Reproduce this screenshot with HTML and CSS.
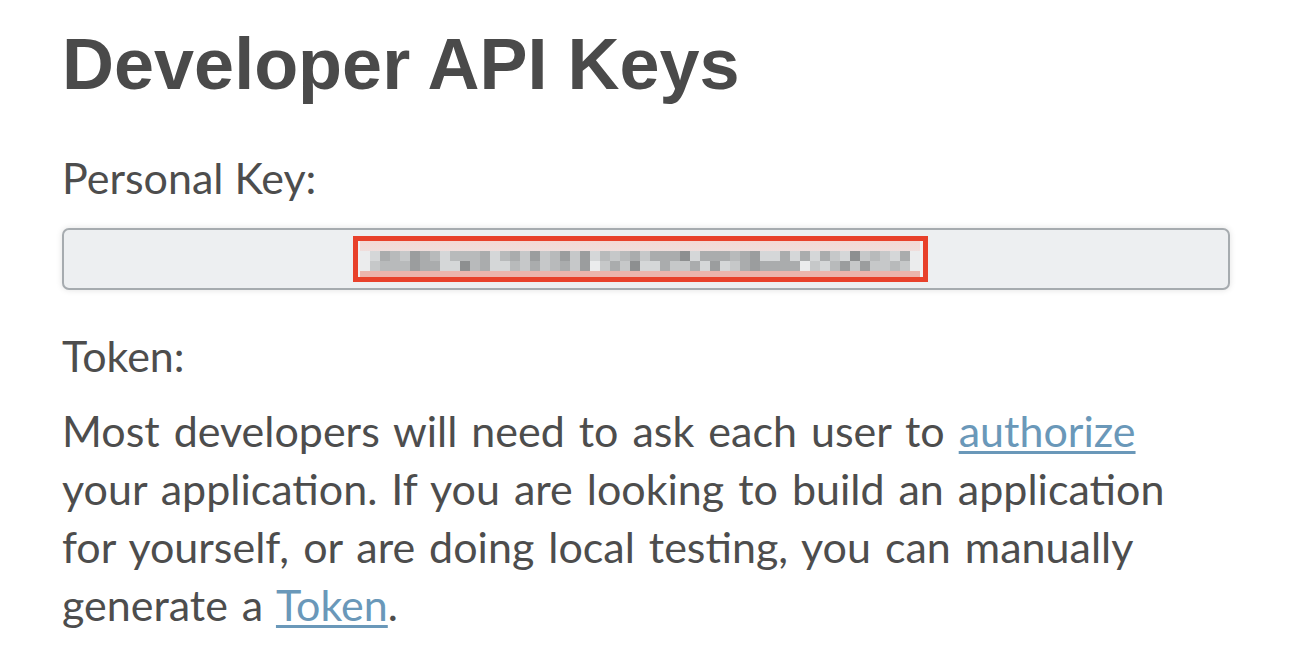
FILE: index.html
```html
<!DOCTYPE html>
<html lang="en">
<head>
<meta charset="utf-8">
<title>Developer API Keys</title>
<link rel="stylesheet" href="styles.css">
</head>
<body>
<main class="page">
  <h1 class="title">Developer API Keys</h1>
  <p class="label">Personal Key:</p>
  <div class="keybox">
    <div class="redact">
      <div class="band band-top"></div>
      <div class="row">
        <i class="s0"></i><i class="s1"></i><i class="s4"></i><i class="s3"></i><i class="s2"></i><i class="s5"></i><i class="s4"></i><i class="s3"></i><i class="s1"></i><i class="s3"></i><i class="s3"></i><i class="s3"></i><i class="s4"></i><i class="s1"></i><i class="s3"></i><i class="s4"></i><i class="s2"></i><i class="s5"></i><i class="s2"></i><i class="s3"></i><i class="s5"></i><i class="s2"></i><i class="s5"></i><i class="s1"></i><i class="s3"></i><i class="s2"></i><i class="s3"></i><i class="s4"></i>
        <i class="s2"></i><i class="s4"></i><i class="s4"></i><i class="s4"></i><i class="s6"></i><i class="s1"></i><i class="s4"></i><i class="s4"></i><i class="s4"></i><i class="s3"></i><i class="s4"></i><i class="s5"></i><i class="s1"></i><i class="s1"></i><i class="s4"></i><i class="s1"></i><i class="s4"></i><i class="s1"></i><i class="s4"></i><i class="s2"></i><i class="s1"></i><i class="s6"></i><i class="s2"></i><i class="s3"></i><i class="s2"></i><i class="s1"></i><i class="s4"></i><i class="s0"></i>
      </div>
      <div class="row">
        <i class="s0"></i><i class="s2"></i><i class="s3"></i><i class="s3"></i><i class="s3"></i><i class="s5"></i><i class="s4"></i><i class="s4"></i><i class="s1"></i><i class="s1"></i><i class="s6"></i><i class="s3"></i><i class="s4"></i><i class="s1"></i><i class="s1"></i><i class="s3"></i><i class="s2"></i><i class="s4"></i><i class="s2"></i><i class="s3"></i><i class="s4"></i><i class="s2"></i><i class="s5"></i><i class="s0"></i><i class="s2"></i><i class="s4"></i><i class="s2"></i><i class="s6"></i>
        <i class="s1"></i><i class="s1"></i><i class="s4"></i><i class="s2"></i><i class="s2"></i><i class="s4"></i><i class="s1"></i><i class="s5"></i><i class="s1"></i><i class="s2"></i><i class="s4"></i><i class="s5"></i><i class="s4"></i><i class="s4"></i><i class="s4"></i><i class="s4"></i><i class="s0"></i><i class="s2"></i><i class="s1"></i><i class="s3"></i><i class="s5"></i><i class="s2"></i><i class="s5"></i><i class="s2"></i><i class="s2"></i><i class="s3"></i><i class="s2"></i><i class="s0"></i>
      </div>
      <div class="band band-bottom"></div>
    </div>
  </div>
  <p class="label label-token">Token:</p>
  <p class="text">Most developers will need to ask each user to <a href="#">authorize</a><br>your application. If you are looking to build an application<br>for yourself, or are doing local testing, you can manually<br>generate a <a href="#">Token</a>.</p>
</main>
</body>
</html>
```

FILE: styles.css
```css
html, body {
  margin: 0;
  padding: 0;
  background: #ffffff;
}

.page {
  width: 1168px;
  padding: 21px 0 0 62px;
  color: #4d4d4d;
  font-family: "Lato", "Noto Sans", sans-serif;
}

.title {
  margin: 0;
  font-family: "Liberation Sans", Arial, sans-serif;
  font-size: 72px;
  line-height: 1.2;
  font-weight: 700;
  letter-spacing: 0;
  color: #4a4a4a;
}

.label {
  margin: 42px 0 0;
  font-size: 43px;
  line-height: 58px;
  font-weight: 400;
}

.keybox {
  margin-top: 21px;
  height: 58px;
  border: 2px solid #a6abaf;
  border-radius: 7px;
  background: #edeff1;
  box-shadow: 0 0 6px rgba(0, 0, 0, 0.12);
  display: flex;
  align-items: center;
  justify-content: center;
  padding-right: 12px;
}

.redact {
  border: 5px solid #e8412b;
  display: flex;
  flex-direction: column;
  padding: 0 3px 0 2px;
  background: #f0f0f1;
}

.band {
  height: 10px;
}

.band-top {
  background: linear-gradient(#f4d8d4, #efdedc);
}

.band-bottom {
  height: 6px;
  background: #ecb4ac;
}

.row {
  display: flex;
  height: 10px;
}

.row i {
  display: block;
  width: 10px;
  height: 10px;
}

.s0 { background: #ebeced; }
.s1 { background: #d5d7d8; }
.s2 { background: #c6c8c9; }
.s3 { background: #b8babb; }
.s4 { background: #aaacad; }
.s5 { background: #9b9d9e; }
.s6 { background: #8d8f90; }

.label-token {
  margin-top: 37px;
}

.text {
  width: 1200px;
  margin: 17px 0 0;
  font-size: 43px;
  line-height: 57.7px;
  word-spacing: 3px;
}

.text a {
  color: #6a98b9;
  text-decoration: underline;
  text-decoration-thickness: 3px;
  text-underline-offset: 4px;
}
```
